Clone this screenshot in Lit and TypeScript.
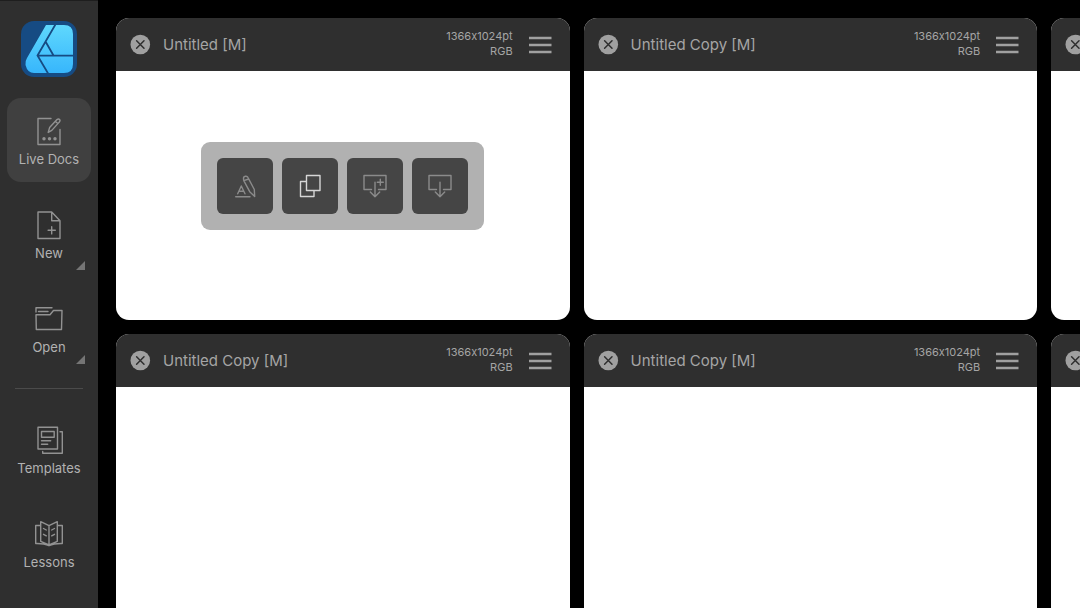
import { LitElement, html, css, svg, nothing } from "lit";
import { customElement, property } from "lit/decorators.js";

const icons = {
  live: svg`<path d="M17 3.500H4V29.500H26V14.500"/><path d="M14.200 17.400L15.600 12.600L23 4.600Q24.500 3.300 25.600 4.500T25 7.400L17.800 15.400ZM21.500 6.400L23.800 8.600"/><g fill="currentColor" stroke="none"><circle cx="10" cy="23.700" r="1.700"/><circle cx="15.500" cy="23.700" r="1.700"/><circle cx="21" cy="23.700" r="1.700"/></g>`,
  new: svg`<path d="M4 3H17.700L26 11.700V29.500H4ZM17.700 3V11.700H26M17.700 17.700V24.900M14.100 21.300H21.300"/>`,
  open: svg`<path d="M2 9V4.800H18M4.500 8.500H14M2 11.800H16L19.500 7.500H28L27.500 26.500H2.300Z"/>`,
  templates: svg`<path d="M4 3.300H23.500V25H4ZM7.500 7.500H20.200V13.300H7.500ZM7.500 16.800H16.700M7.500 20.300H13.700M26 7.700H28.300V29.300H8.700V27.500"/>`,
  lessons: svg`<path d="M15 7.700L6.700 3.700V23.300L15 27L23.300 23.300V3.700ZM15 7.700V27M6.700 7.500H1.700V25.500Q10 25.300 15 27.700Q20 25.300 28.300 25.500V7.500H23.300M9.500 10.500L12.300 12M9.500 16.300L12.300 17.800M20.500 10.500L17.700 12M20.500 16.300L17.700 17.800"/>`,
  rename: svg`<path d="M7.700 23.800L11.300 16L15 23.800M9 21.300H13.600M5.700 26.700H20"/><path d="M13.800 10.700L13.500 8.800Q13.300 6.700 15.300 6.300T18 7.600L24.300 19.500L24.700 26.500L19.700 21.700ZM13.800 10.700L18.700 9"/>`,
  duplicate: svg`<path d="M11.500 5.500H25V20.500H11.500ZM11.500 11.500H5.500V26.500H19V20.500"/>`,
  saveAs: svg`<path d="M11.500 19.500H4V5.500H26V19.500H18.500M15 12.300V26.700M10.300 21.900L15 26.700L19.700 21.900M17.300 12.200H23.300M20.300 9.200V15.200"/>`,
  save: svg`<path d="M11.500 19.500H4V5.500H26V19.500H18.500M15 12.300V26.700M10.300 21.900L15 26.700L19.700 21.900"/>`,
};
type IconName = keyof typeof icons;

@customElement("line-icon")
class LineIcon extends LitElement {
  @property() name: IconName = "new";

  static styles = css`
    :host { display: block; }
    .glyph {
      display: block;
      fill: none;
      stroke: currentColor;
      stroke-width: 1.4;
      stroke-linecap: round;
      stroke-linejoin: round;
    }
  `;

  render() {
    return html`<svg class="glyph" width="30" height="32" viewBox="0 0 30 32" aria-hidden="true">${icons[this.name]}</svg>`;
  }
}

@customElement("side-bar")
class SideBar extends LitElement {
  static styles = css`
    :host {
      display: flex;
      flex-direction: column;
      align-items: center;
      gap: 10px;
      flex: none;
      box-sizing: border-box;
      width: 98px;
      padding-top: 21px;
      background: #2f2f2f;
      box-shadow: inset 0 1px #1e1e1e;
    }
    .logo { display: block; flex: none; margin-bottom: 11px; }
    .item {
      display: grid;
      grid-template-columns: 1fr;
      justify-items: center;
      align-content: start;
      gap: 4px;
      flex: none;
      position: relative;
      width: 84px;
      height: 84px;
      padding: 17px 0 0;
      border: 0;
      border-radius: 14px;
      background: none;
      color: #929292;
      font: 13px/16px Inter, "Liberation Sans", sans-serif;
      cursor: pointer;
    }
    .item.active { background: #404040; }
    .label { color: #b2b2b2; white-space: nowrap; }
    .more {
      position: absolute;
      right: 6px;
      bottom: 6px;
      width: 9px;
      height: 9px;
      background: #757575;
      clip-path: polygon(100% 0, 100% 100%, 0 100%);
    }
    .rule {
      flex: none;
      width: 68px;
      height: 1px;
      margin: 8px 0;
      border: 0;
      background: #4b4b4b;
    }
  `;

  private item(name: IconName, label: string, active = false, more = false) {
    return html`<button class="item ${active ? "active" : ""}">
      <line-icon name=${name}></line-icon>
      <span class="label">${label}</span>
      ${more ? html`<span class="more"></span>` : nothing}
    </button>`;
  }

  render() {
    return html`
      <svg class="logo" width="56" height="56" viewBox="0 0 56 56" role="img" aria-label="Designer">
        <defs>
          <linearGradient id="sky" x1="0" y1="0" x2="0" y2="1">
            <stop offset="0" stop-color="#5fd8fd" />
            <stop offset="1" stop-color="#37b6fc" />
          </linearGradient>
          <clipPath id="plate"><path d="M25 4H43Q52 4 52 13V43Q52 52 43 52H13Q6.500 52 4.500 44Q4 40 6 37Z" /></clipPath>
        </defs>
        <rect width="56" height="56" rx="13" fill="#164b83" />
        <g clip-path="url(#plate)">
          <rect x="4" y="4" width="48" height="48" fill="url(#sky)" />
          <path d="M35.300 2L16.500 34.500L28 54M16.500 34.700H54M24.500 20.500L32.500 34.500" fill="none" stroke="#164b83" stroke-width="1.800" />
        </g>
      </svg>
      ${this.item("live", "Live Docs", true)}
      ${this.item("new", "New", false, true)}
      ${this.item("open", "Open", false, true)}
      <hr class="rule" />
      ${this.item("templates", "Templates")}
      ${this.item("lessons", "Lessons")}
    `;
  }
}

@customElement("doc-card")
class DocCard extends LitElement {
  @property() name = "";
  @property() size = "";
  @property({ type: Boolean }) tools = false;

  static styles = css`
    :host {
      display: flex;
      flex-direction: column;
      min-width: 0;
      border-radius: 13px;
      overflow: hidden;
      background: #fff;
      color: #a5a5a5;
      font-family: Inter, "Liberation Sans", sans-serif;
    }
    .bar {
      display: flex;
      align-items: center;
      flex: none;
      height: 53px;
      padding: 0 18px 0 14px;
      background: #2f2f2f;
    }
    .plain {
      display: block;
      padding: 0;
      border: 0;
      background: none;
      cursor: pointer;
    }
    .symbol { display: block; }
    .title {
      flex: 1;
      margin: 0 0 0 12px;
      font-size: 15px;
      line-height: 20px;
      font-weight: 400;
      white-space: nowrap;
    }
    .meta {
      margin-right: 15px;
      padding-bottom: 2px;
      font-size: 11px;
      line-height: 15px;
      font-variant-ligatures: no-contextual;
      text-align: right;
    }
    .line { display: block; }
    .page {
      display: flex;
      flex: 1;
      align-items: center;
      justify-content: center;
      padding-bottom: 20px;
    }
    .tools {
      display: flex;
      gap: 9px;
      padding: 16px;
      border-radius: 9px;
      background: #b1b1b1;
    }
    .tool {
      display: grid;
      place-items: center;
      width: 56px;
      height: 56px;
      padding: 0;
      border: 0;
      border-radius: 6px;
      background: #454545;
      color: #8b8b8b;
      cursor: pointer;
    }
    .tool.on { color: #d6d6d6; }
  `;

  private tool(name: IconName, label: string, on = false) {
    return html`<button class="tool ${on ? "on" : ""}" aria-label=${label}><line-icon name=${name}></line-icon></button>`;
  }

  render() {
    return html`
      <header class="bar">
        <button class="plain" aria-label="Close">
          <svg class="symbol" width="21" height="21" viewBox="0 0 21 21">
            <circle cx="10.300" cy="10.500" r="9.800" fill="#a0a0a0" />
            <path d="M6.600 6.800L14 14.200M14 6.800L6.600 14.200" stroke="#2f2f2f" stroke-width="1.500" stroke-linecap="round" />
          </svg>
        </button>
        ${this.name
          ? html`<h2 class="title">${this.name}</h2>
              <div class="meta"><span class="line">${this.size}</span><span class="line">RGB</span></div>
              <button class="plain" aria-label="Document menu">
                <svg class="symbol" width="24" height="20" viewBox="0 0 24 20">
                  <path d="M1 3H23.500M1 10H23.500M1 17H23.500" stroke="#a0a0a0" stroke-width="2.700" />
                </svg>
              </button>`
          : nothing}
      </header>
      <div class="page">
        ${this.tools
          ? html`<div class="tools">
              ${this.tool("rename", "Rename")}
              ${this.tool("duplicate", "Duplicate", true)}
              ${this.tool("saveAs", "Save as")}
              ${this.tool("save", "Save")}
            </div>`
          : nothing}
      </div>
    `;
  }
}

@customElement("app-root")
class AppRoot extends LitElement {
  static styles = css`
    :host {
      display: flex;
      height: 100vh;
      overflow: hidden;
      background: #000;
    }
    .docs {
      display: grid;
      flex: 1;
      min-width: 0;
      grid-template-columns: repeat(3, 42vw);
      grid-auto-rows: 28vw;
      align-content: start;
      gap: 14px;
      padding: 18px 0 0 18px;
      overflow: hidden;
    }
  `;

  render() {
    const names = ["Untitled [M]", "Untitled Copy [M]", "", "Untitled Copy [M]", "Untitled Copy [M]", ""];
    return html`
      <side-bar></side-bar>
      <main class="docs">
        ${names.map((name, i) => html`<doc-card .name=${name} .size=${"1366x1024pt"} .tools=${i === 0}></doc-card>`)}
      </main>
    `;
  }
}
